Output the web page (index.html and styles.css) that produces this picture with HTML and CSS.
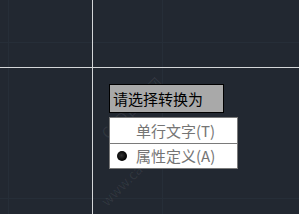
FILE: index.html
```html
<!DOCTYPE html>
<html lang="zh">
<head>
<meta charset="utf-8">
<link rel="stylesheet" href="styles.css">
</head>
<body>
<div class="canvas">
  <div class="grid-v g1"></div>
  <div class="grid-v g2"></div>
  <div class="grid-h g3"></div>
  <div class="grid-h g4"></div>
  <div class="cross-v"></div>
  <div class="cross-h"></div>
  <div class="watermark wm1">CAD自学网</div>
  <div class="watermark wm2">www.cadzxw.com</div>
  <div class="prompt">请选择转换为</div>
  <div class="menu">
    <div class="item"><span class="bullet empty"></span><span class="label">单行文字(T)</span></div>
    <div class="item"><span class="bullet"></span><span class="label">属性定义(A)</span></div>
  </div>
</div>
</body>
</html>
```

FILE: styles.css
```css
html, body {
  margin: 0;
  padding: 0;
}
body {
  width: 299px;
  height: 214px;
  overflow: hidden;
  background: #222831;
  font-family: "Noto Sans CJK SC", "Noto Sans", sans-serif;
}
.canvas {
  position: relative;
  width: 299px;
  height: 214px;
  background: #222831;
}
.grid-v {
  position: absolute;
  top: 0;
  bottom: 0;
  width: 1px;
  background: #262e38;
}
.grid-h {
  position: absolute;
  left: 0;
  right: 0;
  height: 1px;
  background: #262e38;
}
.g1 { left: 8px; }
.g2 { left: 162px; }
.g3 { top: 42px; }
.g4 { top: 198px; }
.cross-v {
  position: absolute;
  left: 92px;
  top: 0;
  bottom: 0;
  width: 1px;
  background: #d4d6d8;
}
.cross-h {
  position: absolute;
  top: 67px;
  left: 0;
  right: 0;
  height: 1px;
  background: #d4d6d8;
}
.watermark {
  position: absolute;
  color: rgba(255, 255, 255, 0.07);
  font-size: 16px;
  transform: rotate(-45deg);
  transform-origin: left bottom;
  white-space: nowrap;
}
.wm1 { left: 112px; top: 120px; }
.wm2 { left: 110px; top: 190px; font-size: 14px; }
.prompt {
  position: absolute;
  left: 109px;
  top: 84px;
  width: 110px;
  height: 27px;
  box-sizing: content-box;
  border: 1px solid #000;
  background: #a9a9a9;
  color: #000;
  font-size: 15px;
  line-height: 27px;
  padding: 0 0 0 3px;
  white-space: nowrap;
}
.menu {
  position: absolute;
  left: 109px;
  top: 117px;
  width: 127px;
  border: 1px solid #7a7a7a;
  background: #fff;
  display: flex;
  flex-direction: column;
}
.item {
  display: flex;
  align-items: center;
  height: 25px;
  padding-left: 7px;
  gap: 9px;
}
.item + .item {
  border-top: 1px solid #7a7a7a;
  height: 24px;
}
.bullet {
  width: 10px;
  height: 10px;
  border-radius: 50%;
  background: radial-gradient(circle at 45% 45%, #333 0, #000 70%);
  flex: none;
}
.bullet.empty {
  background: none;
}
.label {
  font-size: 15px;
  color: #757575;
  line-height: 24px;
  white-space: nowrap;
}
```
